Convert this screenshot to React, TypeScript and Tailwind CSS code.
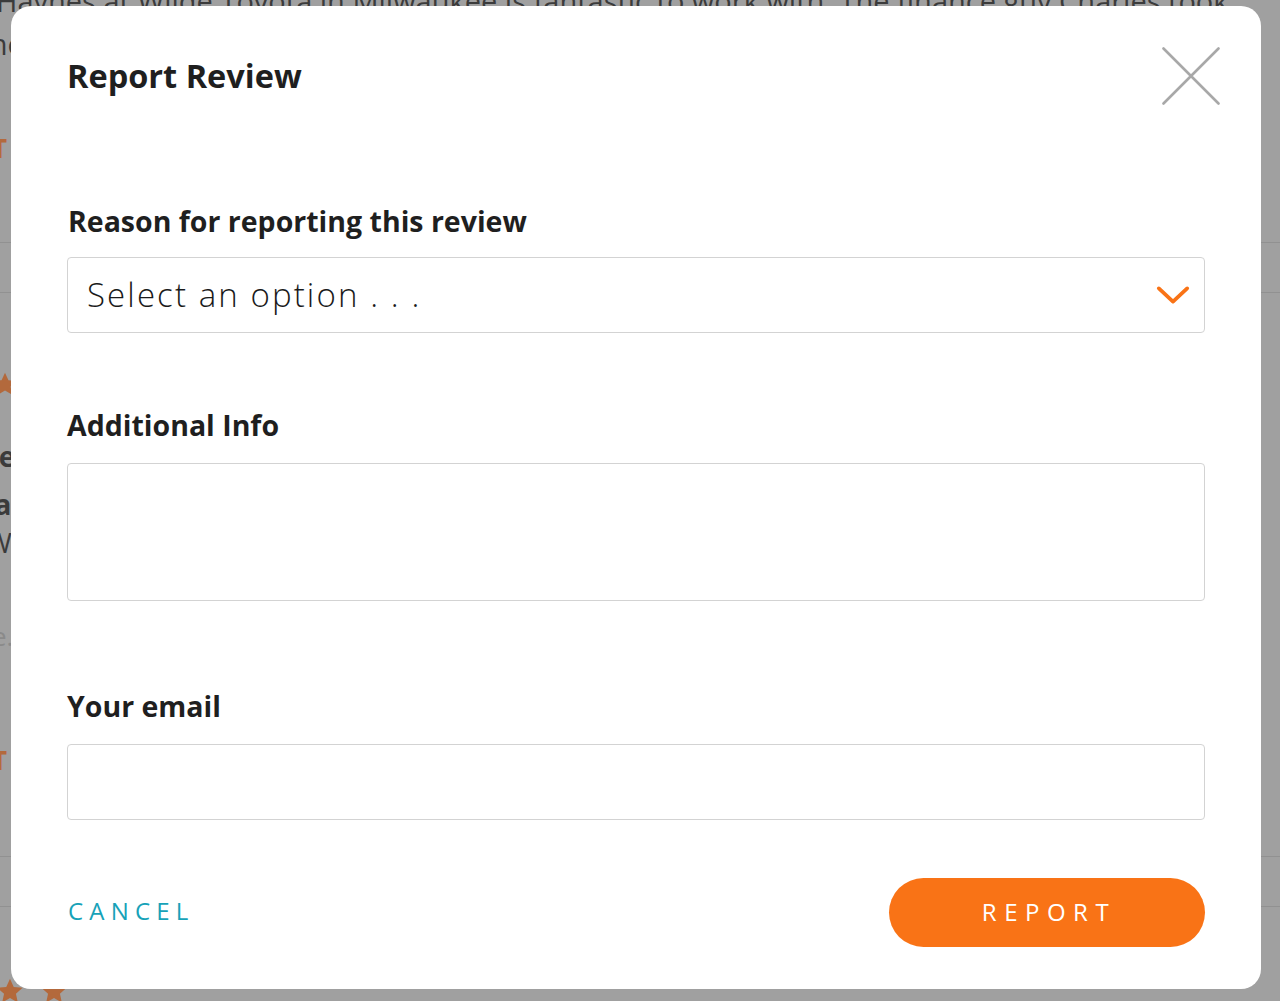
import React from "react";

function Star({ className }: { className?: string }) {
  return (
    <svg viewBox="0 0 24 24" className={className} fill="currentColor">
      <path d="M12 1.5l3.2 7 7.6.8-5.7 5.1 1.6 7.5L12 18l-6.7 3.9 1.6-7.5L1.2 9.3l7.6-.8z" />
    </svg>
  );
}

export default function App() {
  const font = { fontFamily: "'Open Sans', Lato, sans-serif" };
  return (
    <div
      className="relative w-[1280px] h-[1001px] overflow-hidden bg-[#a0a0a0]"
      style={font}
    >
      {/* dimmed page behind */}
      <div className="flex flex-col text-[#3b3b3b]">
        <div className="-mt-[21px] -ml-[4px] whitespace-nowrap text-[29px] leading-[43px]">
          Haynes at Wilde Toyota in Milwaukee is fantastic to work with. The finance guy Charles took
        </div>
        <div className="-ml-[38px] whitespace-nowrap text-[29px] leading-[43px]">
          other
        </div>
        <div className="mt-[68px] -ml-[8px] text-[26px] leading-[30px] font-bold text-[#b3693c]">
          T
        </div>
        <div className="mt-[79px] h-px bg-[#919191]" />
        <div className="mt-[49px] h-px bg-[#919191]" />
        <div className="mt-[78px] -ml-[8px] text-[#b3693c]">
          <Star className="w-[26px] h-[26px]" />
        </div>
        <div className="mt-[42px] -ml-[14px] whitespace-nowrap text-[28px] leading-[34px] font-bold">
          re
        </div>
        <div className="mt-[14px] -ml-[14px] whitespace-nowrap text-[28px] leading-[34px] font-bold">
          ia
        </div>
        <div className="mt-[4px] -ml-[14px] whitespace-nowrap text-[28px] leading-[34px]">
          We
        </div>
        <div className="mt-[62px] -ml-[8px] whitespace-nowrap text-[26px] leading-[30px] text-[#8a8a8a]">
          e.
        </div>
        <div className="mt-[94px] -ml-[8px] text-[26px] leading-[30px] font-bold text-[#b3693c]">
          T
        </div>
        <div className="mt-[81px] h-px bg-[#919191]" />
        <div className="mt-[49px] h-px bg-[#919191]" />
        <div className="mt-[70px] flex gap-[16px] -ml-[4px] text-[#b3693c]">
          <Star className="w-[28px] h-[28px]" />
          <Star className="w-[28px] h-[28px]" />
        </div>
      </div>

      {/* modal */}
      <div className="absolute left-[11px] top-[6px] w-[1250px] h-[983px] rounded-[20px] bg-white px-[56px] pt-[50px] flex flex-col">
        <div className="text-[32.5px] leading-[40px] font-bold text-[#1f1f1f]">
          Report Review
        </div>
        <button className="absolute left-[1151px] top-[41px] w-[58px] h-[58px] text-[#a8a8a8]">
          <svg viewBox="0 0 58 58" className="w-[58px] h-[58px]" fill="none" stroke="currentColor" strokeWidth="2.6" strokeLinecap="round">
            <path d="M1.5 1.5L56.5 56.5M56.5 1.5L1.5 56.5" />
          </svg>
        </button>

        <label className="mt-[109px] pl-[1px] text-[28.5px] leading-[32px] font-bold text-[#1f1f1f]">
          Reason for reporting this review
        </label>
        <div className="mt-[20px] h-[76px] w-[1138px] rounded-[4px] border-[1.5px] border-[#d3d3d3] flex items-center justify-between pl-[19px] pr-[16px]">
          <span className="text-[33px] leading-[40px] font-light tracking-[2.1px] text-[#1a1a1a]">
            Select an option . . .
          </span>
          <svg viewBox="0 0 36 22" className="w-[34px] h-[22px] mr-[-2px]" fill="none" stroke="#f97316" strokeWidth="4" strokeLinecap="round" strokeLinejoin="round">
            <path d="M3 4l15 14L33 4" />
          </svg>
        </div>

        <label className="mt-[76px] text-[28.5px] leading-[32px] font-bold text-[#1f1f1f]">
          Additional Info
        </label>
        <div className="mt-[22px] h-[138px] w-[1138px] rounded-[4px] border-[1.5px] border-[#d3d3d3]" />

        <label className="mt-[89px] text-[28.5px] leading-[32px] font-bold text-[#1f1f1f]">
          Your email
        </label>
        <div className="mt-[22px] h-[76px] w-[1138px] rounded-[4px] border-[1.5px] border-[#d3d3d3]" />

        <div className="mt-[58px] flex items-center justify-between">
          <button className="pl-[1px] -mt-[4px] text-[24px] leading-[30px] tracking-[6.2px] text-[#17a2b8]">
            CANCEL
          </button>
          <button className="w-[316px] h-[69px] rounded-full bg-[#f97316] text-white text-[24px] leading-[30px] tracking-[7.5px] pl-[4px] pb-[2px]">
            REPORT
          </button>
        </div>
      </div>
    </div>
  );
}
